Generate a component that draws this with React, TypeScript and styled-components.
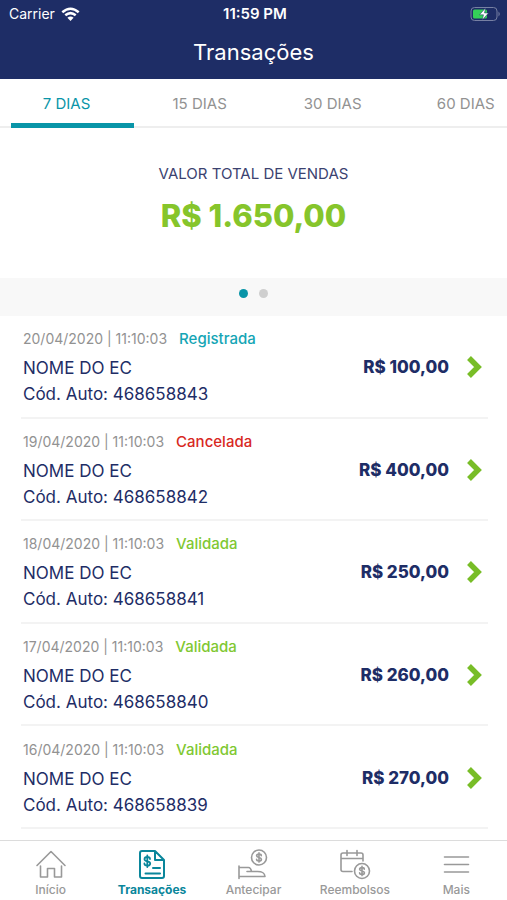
import React, { useState } from "react";
import styled, { createGlobalStyle } from "styled-components";

const navy = "#1e2d66";
const teal = "#0995a8";
const green = "#86c52b";
const gray = "#929292";

const GlobalStyle = createGlobalStyle`
  *, *::before, *::after { box-sizing: border-box; }
  body { margin: 0; background: #fff; font-family: Inter, "Noto Sans", sans-serif; color: ${navy}; }
  button { border: 0; margin: 0; padding: 0; background: none; font: inherit; color: inherit; text-align: inherit; cursor: pointer; }
  h1, h2, p, ul { margin: 0; padding: 0; }
  ul { list-style: none; }
`;

const Screen = styled.div`
  display: flex;
  flex-direction: column;
  min-height: 100vh;
`;

const Header = styled.header`
  background: ${navy};
  color: #fff;
  padding-bottom: 14px;
`;

const StatusBar = styled.div`
  display: grid;
  grid-template-columns: 1fr auto 1fr;
  align-items: center;
  height: 28px;
  padding: 0 6px 0 9px;
  font-size: 14px;
  line-height: 18px;
`;

const Carrier = styled.div`
  display: flex;
  align-items: center;
  gap: 6px;
`;

const Clock = styled.time`
  font-size: 15px;
  font-weight: 600;
`;

const Battery = styled.div`
  display: flex;
  justify-content: flex-end;
`;

const Title = styled.h1`
  font-size: 22px;
  line-height: 26px;
  padding-top: 11px;
  font-weight: 400;
  text-align: center;
`;

const TabRow = styled.nav`
  display: flex;
  flex: none;
  overflow: hidden;
  box-shadow: inset 0 -2px #eeeeee;
`;

const Tab = styled.button<{ $active: boolean }>`
  position: relative;
  flex: 0 0 26.25%;
  font-size: 15px;
  line-height: 49px;
  text-align: center;
  color: ${(p) => (p.$active ? teal : gray)};

  &::after {
    content: "";
    display: ${(p) => (p.$active ? "block" : "none")};
    position: absolute;
    left: 11px;
    right: -1px;
    bottom: 0;
    height: 5px;
    background: ${teal};
  }
`;

const Summary = styled.section`
  flex: none;
  padding: 36px 16px 44px;
  text-align: center;
`;

const SummaryLabel = styled.h2`
  font-size: 15px;
  line-height: 20px;
  font-weight: 400;
  color: #3b4270;
`;

const Total = styled.p`
  padding-top: 14px;
  font-size: 31px;
  line-height: 36px;
  font-weight: 800;
  color: ${green};
`;

const Pager = styled.div`
  display: flex;
  flex: none;
  align-items: center;
  justify-content: center;
  gap: 11px;
  height: 38px;
  padding-bottom: 8px;
  background: #f8f8f8;
`;

const Dot = styled.button<{ $active: boolean }>`
  width: 9px;
  height: 9px;
  border-radius: 50%;
  background: ${(p) => (p.$active ? teal : "#cfcfcf")};
`;

const List = styled.ul`
  display: flex;
  flex: 1;
  flex-direction: column;
  padding: 0 19px 11px 21px;
`;

const Item = styled.li`
  display: flex;
  flex: 1 0 auto;
  border-bottom: 2px solid #f3f3f3;
`;

const ItemButton = styled.button`
  display: flex;
  flex: 1;
  align-items: center;
  padding: 2px 5px 0 2px;
`;

const Details = styled.span`
  display: flex;
  flex: 1;
  flex-direction: column;
  padding-bottom: 2px;
`;

const Meta = styled.span`
  display: flex;
  gap: 12px;
  font-size: 14px;
  line-height: 28px;
  padding-bottom: 2px;
  color: ${gray};
`;

const statusColors = { Registrada: "#14a5b5", Cancelada: "#d8281f", Validada: "#7fc832" };
type StatusName = keyof typeof statusColors;

const Status = styled.span<{ $status: StatusName }>`
  font-size: 15px;
  font-weight: 500;
  color: ${(p) => statusColors[p.$status]};
`;

const Line = styled.span`
  font-size: 17px;
  line-height: 26px;
`;

const Amount = styled.span`
  font-size: 17px;
  line-height: 24px;
  font-weight: 800;
  margin-right: 18px;
`;

const BottomNav = styled.nav`
  display: grid;
  grid-template-columns: repeat(5, 1fr);
  flex: none;
  padding-bottom: 2px;
  border-top: 1px solid #dcdcdc;
`;

const NavItem = styled.button<{ $active: boolean }>`
  display: flex;
  flex-direction: column;
  align-items: center;
  padding-top: 7px;
  gap: 2px;
  font-size: 12px;
  line-height: 16px;
  font-weight: ${(p) => (p.$active ? 700 : 500)};
  color: ${(p) => (p.$active ? "#0a869b" : "#999")};
`;

const WifiIcon = () => (
  <svg width="19" height="15" viewBox="0 0 19 15" fill="none" stroke="#fff" strokeWidth="2.5" aria-hidden="true">
    <path d="M1.3 5.2Q9.5-1.8 17.7 5.2M4.3 8.3Q9.5 3.9 14.7 8.3" />
    <path d="M9.5 14 6.4 10.8Q9.5 8.3 12.6 10.8Z" fill="#fff" stroke="none" />
  </svg>
);

const BatteryIcon = () => (
  <svg width="31" height="16" viewBox="0 0 31 16" role="img" aria-label="Bateria carregando">
    <rect x="1" y="1.5" width="26" height="13" rx="3.5" fill="none" stroke="#7780a3" />
    <path d="M28.5 5.5Q31 8 28.5 10.5Z" fill="#7780a3" />
    <rect x="3" y="3.5" width="14" height="9" rx="1.5" fill="#34d058" />
    <path d="M15.500 2 9.500 8.800h4L12.300 14 18.500 7h-4Z" fill="#fff" stroke={navy} strokeWidth=".5" />
  </svg>
);

const Chevron = () => (
  <svg width="16" height="24" viewBox="0 0 16 24" fill="none" stroke="#78bd27" strokeWidth="5.5" aria-hidden="true">
    <path d="m2 3 9 9-9 9" />
  </svg>
);

const Icon = ({ children }: { children: React.ReactNode }) => (
  <svg width="32" height="32" viewBox="0 0 32 32" fill="none" stroke="currentColor" strokeWidth="1.6" strokeLinejoin="round" strokeLinecap="round" aria-hidden="true">
    {children}
  </svg>
);

const HomeIcon = () => (
  <Icon>
    <path d="M2 17.500 16 3.500 30 17.500M5.500 18v11h7v-8.500h7V29h7V18" />
  </Icon>
);

const ReceiptIcon = () => (
  <Icon>
    <path strokeWidth="2" d="M19 3H6a2 2 0 0 0-2 2v23a2 2 0 0 0 2 2h20a2 2 0 0 0 2-2V12Z M19 3v9H28M17 20h7M9.500 25.500h14.500" />
    <path strokeWidth="1.800" d="M14 11c0-1.300-1.200-2-2.700-2s-2.800.8-2.800 2.200c0 3 5.700 1.300 5.700 4.200 0 1.400-1.300 2.200-2.900 2.200s-2.900-.8-2.900-2.100M11.300 7.500v11.600" />
  </Icon>
);

const AdvanceIcon = () => (
  <Icon>
    <circle cx="22" cy="9.500" r="7.500" />
    <path d="M24.300 7.700c0-1-1-1.600-2.300-1.600s-2.400.6-2.400 1.700c0 2.400 4.800 1.100 4.800 3.400 0 1.100-1.100 1.800-2.400 1.800s-2.400-.6-2.400-1.700M22 4.900v9.200M2 18v12.500M2 19.500h9.500c1.800 0 2.500 1.500 3 4M10 23.500h10.500c4 0 7 .5 7.500 5H2" />
  </Icon>
);

const RefundIcon = () => (
  <Icon>
    <path d="M13 23.500H4a2 2 0 0 1-2-2V7a2 2 0 0 1 2-2h18a2 2 0 0 1 2 2v6M2 10.500h22M8 2.500v5M18 2.500v5" />
    <circle cx="23" cy="23" r="7.500" />
    <path d="M25.300 21.200c0-1-1-1.600-2.300-1.600s-2.400.6-2.400 1.700c0 2.400 4.800 1.100 4.800 3.400 0 1.100-1.100 1.800-2.400 1.800s-2.400-.6-2.400-1.700M23 18.400v9.200" />
  </Icon>
);

const MoreIcon = () => (
  <Icon>
    <path d="M4.500 9h24M4.500 16.500h24M4.500 24h24" />
  </Icon>
);

const periods = ["7 DIAS", "15 DIAS", "30 DIAS", "60 DIAS"];

const transactions: { date: string; status: StatusName; code: string; amount: string }[] = [
  { date: "20/04/2020", status: "Registrada", code: "468658843", amount: "R$ 100,00" },
  { date: "19/04/2020", status: "Cancelada", code: "468658842", amount: "R$ 400,00" },
  { date: "18/04/2020", status: "Validada", code: "468658841", amount: "R$ 250,00" },
  { date: "17/04/2020", status: "Validada", code: "468658840", amount: "R$ 260,00" },
  { date: "16/04/2020", status: "Validada", code: "468658839", amount: "R$ 270,00" },
];

const navItems = [
  { label: "Início", Glyph: HomeIcon },
  { label: "Transações", Glyph: ReceiptIcon },
  { label: "Antecipar", Glyph: AdvanceIcon },
  { label: "Reembolsos", Glyph: RefundIcon },
  { label: "Mais", Glyph: MoreIcon },
];

export default function App() {
  const [period, setPeriod] = useState(0);
  const [page, setPage] = useState(0);
  const [section, setSection] = useState(1);

  return (
    <Screen>
      <GlobalStyle />
      <Header>
        <StatusBar>
          <Carrier>Carrier <WifiIcon /></Carrier>
          <Clock>11:59 PM</Clock>
          <Battery><BatteryIcon /></Battery>
        </StatusBar>
        <Title>Transações</Title>
      </Header>
      <TabRow>
        {periods.map((label, i) => (
          <Tab key={label} $active={i === period} onClick={() => setPeriod(i)}>{label}</Tab>
        ))}
      </TabRow>
      <Summary>
        <SummaryLabel>VALOR TOTAL DE VENDAS</SummaryLabel>
        <Total>R$ 1.650,00</Total>
      </Summary>
      <Pager>
        {[0, 1].map((i) => (
          <Dot key={i} $active={i === page} aria-label={`Página ${i + 1}`} onClick={() => setPage(i)} />
        ))}
      </Pager>
      <List>
        {transactions.map((t) => (
          <Item key={t.code}>
            <ItemButton>
              <Details>
                <Meta>{t.date} | 11:10:03 <Status $status={t.status}>{t.status}</Status></Meta>
                <Line>NOME DO EC</Line>
                <Line>Cód. Auto: {t.code}</Line>
              </Details>
              <Amount>{t.amount}</Amount>
              <Chevron />
            </ItemButton>
          </Item>
        ))}
      </List>
      <BottomNav>
        {navItems.map(({ label, Glyph }, i) => (
          <NavItem key={label} $active={i === section} onClick={() => setSection(i)}>
            <Glyph />
            {label}
          </NavItem>
        ))}
      </BottomNav>
    </Screen>
  );
}
